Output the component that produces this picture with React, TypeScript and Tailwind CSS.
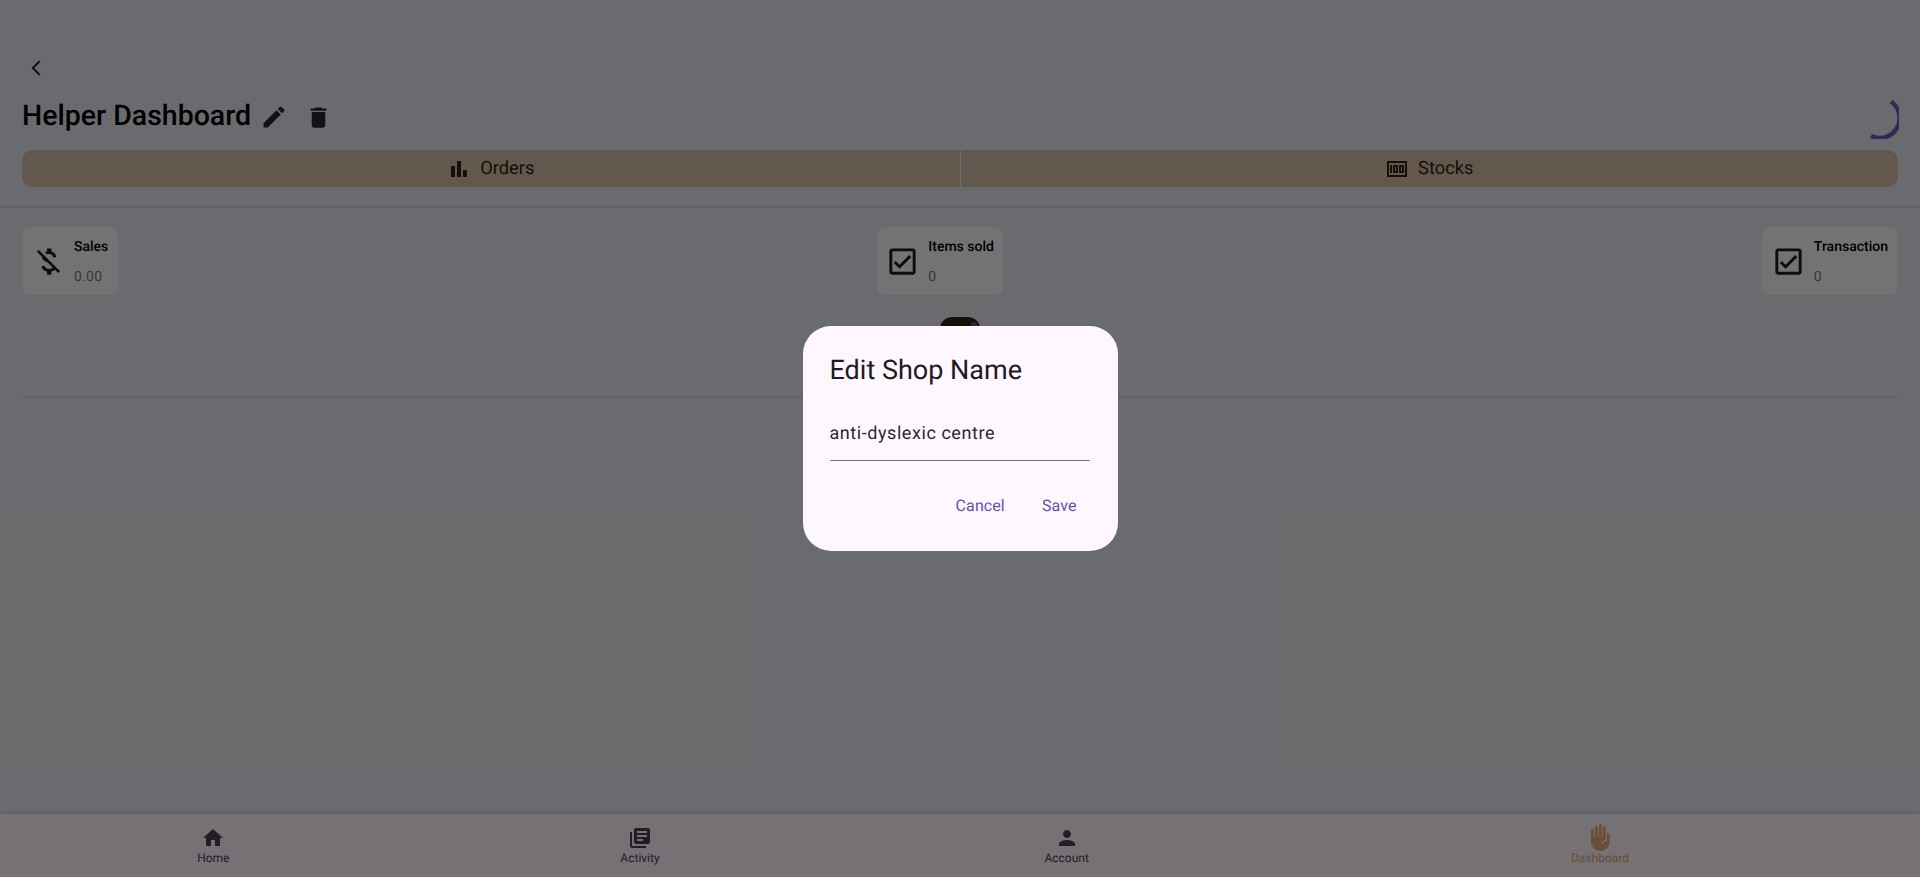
import React from "react";
import {
  MdArrowBackIosNew, MdEdit, MdDelete, MdBarChart, MdMoney, MdMoneyOff, MdOutlineCheckBox,
  MdHome, MdLibraryBooks, MdPerson, MdFrontHand,
} from "react-icons/md";

function Stat({ icon, label, value, wide }: { icon: React.ReactNode; label: string; value: string; wide?: boolean }) {
  return (
    <div className={`flex h-[68px] items-center gap-[8px] rounded-lg bg-[#fafafa] ${wide ? "pl-[9px] pr-[10px]" : "pl-[8px] pr-[9px]"}`}>
      <span className="w-[35px] shrink-0 text-[#1d1b20]">{icon}</span>
      <div className="flex h-full flex-col justify-between pt-[10px] pb-[8px]">
        <span className="text-[14px] leading-[20px] font-medium text-[#000]">{label}</span>
        <span className="text-[14px] leading-[20px] tracking-[0.25px] text-[#7d7d7d]">{value}</span>
      </div>
    </div>
  );
}

function NavItem({ icon, label, active }: { icon: React.ReactNode; label: string; active?: boolean }) {
  return (
    <div className={`flex flex-col items-center pt-[11px] ${active ? "text-[#e6ab76]" : "text-[#49454f]"}`}>
      <span className="flex h-[25px] items-center">{icon}</span>
      <span className="text-[12px] leading-[16px]">{label}</span>
    </div>
  );
}

export default function App() {
  return (
    <div className="relative flex h-screen flex-col overflow-hidden bg-[#e8e9ef] font-['Roboto',sans-serif] antialiased [text-rendering:geometricPrecision]">
      <main className="flex-1">
        <div className="px-[22px] pt-[59px]">
          <MdArrowBackIosNew size={18} className="ml-[5px] text-[#1d1b20]" />
          <div className="mt-[20px] flex h-[40px] items-center">
            <h1 className="pb-[2px] text-[28.5px] leading-[38px] font-medium text-[#000]">Helper Dashboard</h1>
            <MdEdit size={28} className="ml-[9px] text-[#2b2930]" />
            <MdDelete size={27} className="ml-[17px] text-[#2b2930]" />
            <svg viewBox="0 0 44 44" className="ml-auto -mr-[1px] h-[44px] w-[44px]">
              <path d="M36 6.5 A 20 20 0 0 1 16 41" fill="none" stroke="#6f5ab8" strokeWidth="4.5" />
            </svg>
          </div>
          <div className="mt-[13px] grid h-[37px] grid-cols-2 gap-[1px] text-[18.3px] text-[#35220f]">
            <div className="flex items-center justify-center gap-[9px] rounded-l-[10px] bg-[#d8c0a8]">
              <MdBarChart size={24} />
              <span className="pt-[1px]">Orders</span>
            </div>
            <div className="flex items-center justify-center gap-[9px] rounded-r-[10px] bg-[#d8c0a8]">
              <MdMoney size={24} />
              <span className="pt-[1px]">Stocks</span>
            </div>
          </div>
        </div>
        <div className="mt-[19px] h-[2px] bg-[#d2d5db]" />
        <div className="flex justify-between px-[22px] pt-[19px]">
          <Stat wide icon={<MdMoneyOff size={35} />} label="Sales" value="0.00" />
          <Stat icon={<MdOutlineCheckBox size={35} />} label="Items sold" value="0" />
          <Stat wide icon={<MdOutlineCheckBox size={35} />} label="Transaction" value="0" />
        </div>
        <div className="relative mx-auto mt-[22px] h-[40px] w-[40px] overflow-hidden rounded-[12px] bg-[#35220f]">
          <div className="absolute right-[3px] top-[5px] h-[6px] w-[6px] rounded-full bg-[#6750a4]" />
        </div>
        <div className="mx-[22px] mt-[39px] h-[2px] bg-[#d2d5db]" />
      </main>
      <nav className="grid h-[63px] grid-cols-[2fr_2fr_2fr_3fr] bg-[#fef7ff] shadow-[0_-1px_2px_rgba(0,0,0,0.15)]">
        <NavItem icon={<MdHome size={24} />} label="Home" />
        <NavItem icon={<MdLibraryBooks size={24} />} label="Activity" />
        <NavItem icon={<MdPerson size={24} />} label="Account" />
        <NavItem icon={<MdFrontHand size={27} />} label="Dashboard" active />
      </nav>
      <div className="h-[1px] bg-[#fef7ff]" />

      <div className="absolute inset-x-0 top-0 bottom-[1px] flex items-center justify-center bg-black/54">
        <div className="h-[225px] w-[315px] rounded-[28px] bg-[#fef7ff] pl-[27px] pr-[28px] pt-[28px]">
          <div className="text-[27px] leading-[32px] text-[#1d1b20]">Edit Shop Name</div>
          <div className="mt-[22px] flex h-[53px] items-center border-b border-[#79747e] pb-[2px] text-[18px] tracking-[0.56px] text-[#2b2930]">
            anti-dyslexic centre
          </div>
          <div className="mt-[35px] flex justify-end gap-[37px] pr-[13px] text-[16px] leading-[20px] tracking-[0.1px] text-[#6750a4]">
            <span>Cancel</span>
            <span>Save</span>
          </div>
        </div>
      </div>
    </div>
  );
}
